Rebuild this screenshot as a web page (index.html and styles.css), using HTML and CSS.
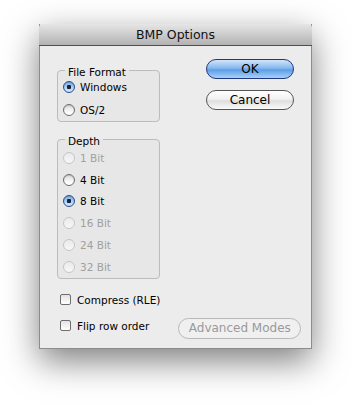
FILE: index.html
```html
<!DOCTYPE html>
<html>
<head>
<meta charset="utf-8">
<link rel="stylesheet" href="styles.css">
</head>
<body>
<div class="window">
  <div class="titlebar">BMP Options</div>
  <div class="content">
    <div class="top">
      <div class="left">
        <fieldset class="group g1">
          <legend>File Format</legend>
          <div class="row r1"><span class="radio on"></span><span class="lbl">Windows</span></div>
          <div class="row r1"><span class="radio"></span><span class="lbl">OS/2</span></div>
        </fieldset>
        <fieldset class="group g2">
          <legend>Depth</legend>
          <div class="row r2 dis"><span class="radio"></span><span class="lbl">1 Bit</span></div>
          <div class="row r2"><span class="radio"></span><span class="lbl">4 Bit</span></div>
          <div class="row r2"><span class="radio on"></span><span class="lbl">8 Bit</span></div>
          <div class="row r2 dis"><span class="radio"></span><span class="lbl">16 Bit</span></div>
          <div class="row r2 dis"><span class="radio"></span><span class="lbl">24 Bit</span></div>
          <div class="row r2 dis"><span class="radio"></span><span class="lbl">32 Bit</span></div>
        </fieldset>
      </div>
      <div class="right">
        <button class="btn ok">OK</button>
        <button class="btn cancel">Cancel</button>
      </div>
    </div>
    <div class="checks">
      <div class="crow"><span class="check"></span><span class="lbl">Compress (RLE)</span></div>
      <div class="crow"><span class="check"></span><span class="lbl">Flip row order</span><button class="btn adv">Advanced Modes</button></div>
    </div>
  </div>
</div>
</body>
</html>
```
FILE: styles.css
```css
html, body { margin: 0; padding: 0; background: #fff; }
body {
  box-sizing: border-box;
  height: 404px;
  padding: 24px 0 0 39px;
  font-family: "DejaVu Sans", "Noto Sans", sans-serif;
  font-size: 10.5px;
  color: #000;
}
.window {
  width: 273px;
  height: 325px;
  box-sizing: border-box;
  background: #ececec;
  border: 1px solid #8c8c8c;
  border-top: none;
  box-shadow: 0 12px 32px rgba(0,0,0,0.5);
  display: flex;
  flex-direction: column;
}
.titlebar {
  height: 21px;
  border-bottom: 1px solid #505050;
  background: linear-gradient(#e6e6e6, #b2b2b2);
  text-align: center;
  font-size: 12.5px;
  line-height: 22px;
  color: #111;
  margin: 0 -1px;
  border-radius: 4px 4px 0 0;
}
.content {
  padding: 0 0 0 17px;
}
.top { display: flex; }
.left { width: 103px; }
.group {
  margin: 0;
  padding: 0 0 2px 0;
  border: 1px solid #bcbcbc;
  border-radius: 4px;
  background: rgba(0,0,0,0.02);
}
.group legend {
  margin-left: 7px;
  padding: 4px 3px 0;
  line-height: 12px;
  font-size: 10.5px;
}
.g1 { margin-top: 16px; }
.g2 { margin-top: 9px; padding-bottom: 0; }
.row { display: flex; align-items: center; padding-left: 5px; }
.r1 { height: 18px; }
.r1 + .r1 { margin-top: 5px; }
.r2 { height: 21.8px; }
.radio {
  width: 12px; height: 12px;
  box-sizing: border-box;
  border-radius: 50%;
  border: 1px solid #6e6e6e;
  background: linear-gradient(#dcdcdc, #ffffff 80%);
  margin-right: 5px;
  box-shadow: inset 0 1px 1px rgba(0,0,0,0.15);
}
.radio.on {
  border-color: #2c4c88;
  background: radial-gradient(circle at 50% 50%, #1a2140 0 2px, transparent 2.5px), linear-gradient(#7fb0e6, #c8e2fb 85%);
}
.dis .radio { border-color: #c6c6c6; background: linear-gradient(#eaeaea, #f7f7f7); box-shadow: none; }
.dis .lbl { color: #a0a0a0; }
.right {
  margin-left: 46px;
  padding-top: 13px;
  display: flex;
  flex-direction: column;
  gap: 11px;
}
.btn {
  font-family: "DejaVu Sans", "Noto Sans", sans-serif;
  font-size: 12px;
  color: #000;
  padding: 0;
  box-sizing: border-box;
  border-radius: 11px;
}
.ok, .cancel { width: 88px; height: 20px; }
.ok {
  border: 1px solid #23367e;
  background: linear-gradient(#d2e5fb 0%, #86b8ee 45%, #5d9de6 55%, #a6d2f8 100%);
}
.cancel {
  border: 1px solid #555;
  background: linear-gradient(#ffffff 0%, #f1f1f1 45%, #dedede 55%, #fafafa 100%);
}
.checks { padding-top: 10px; }
.crow { display: flex; align-items: center; height: 22px; padding-left: 3px; }
.crow + .crow { margin-top: 4px; }
.check {
  width: 11px; height: 11px;
  box-sizing: border-box;
  border: 1px solid #6e6e6e;
  border-radius: 2px;
  background: linear-gradient(#e2e2e2, #ffffff);
  margin-right: 6px;
}
.adv {
  margin-left: 29px;
  margin-top: 5px;
  width: 123px;
  height: 21px;
  border: 1px solid #b8b8b8;
  background: #f0f0f0;
  color: #9a9a9a;
  font-size: 12px;
}
```
